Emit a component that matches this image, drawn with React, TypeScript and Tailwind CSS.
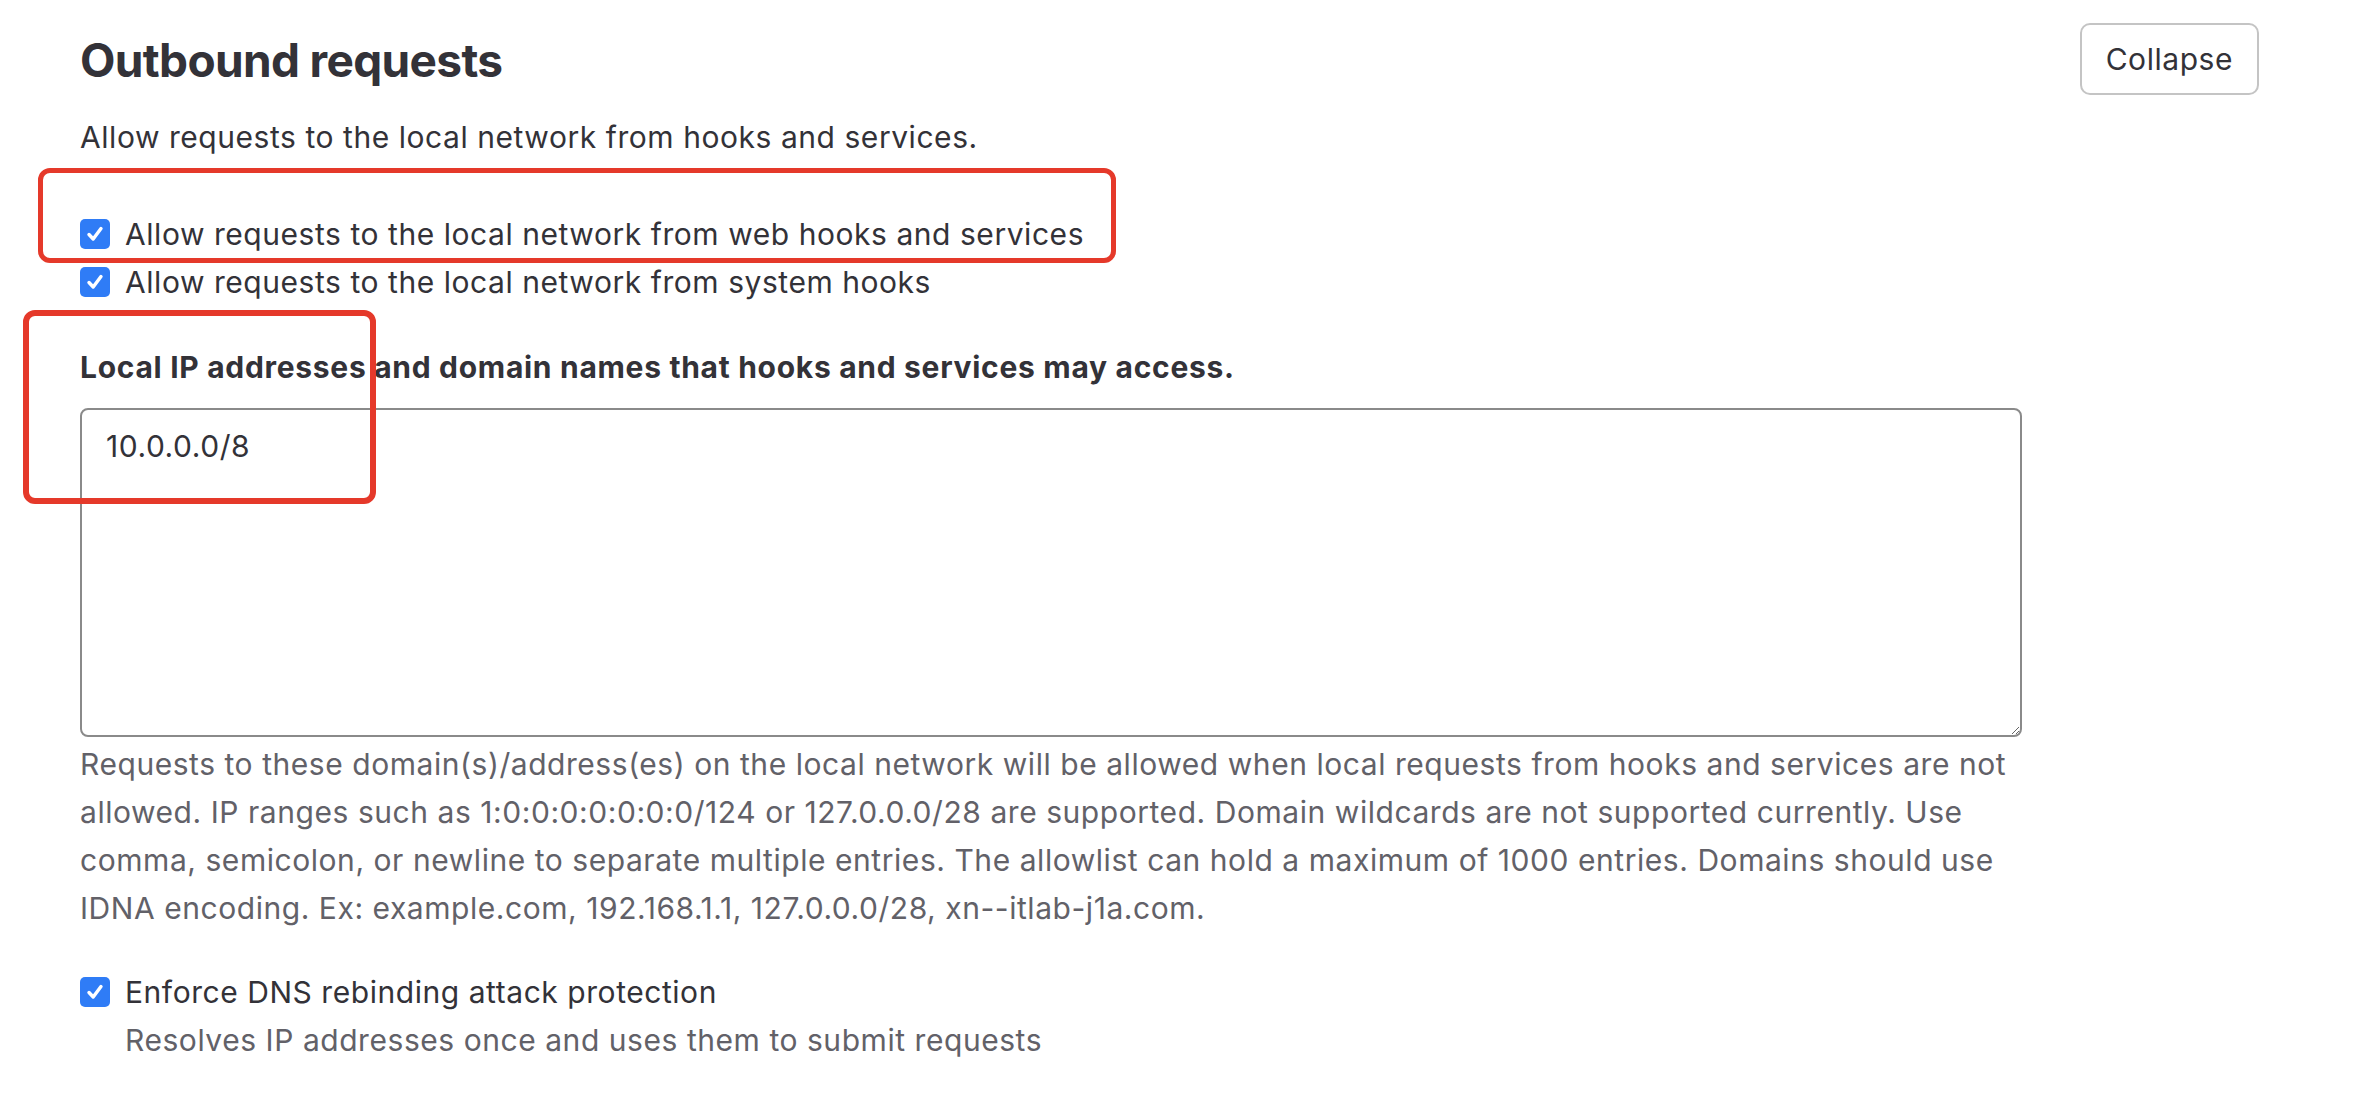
import React from "react";

const FONT = "font-['Inter','Noto_Sans','Liberation_Sans',sans-serif]";

function Check() {
  return (
    <span className="flex h-[30px] w-[30px] shrink-0 items-center justify-center rounded-[5px] bg-[#2f7cf6]">
      <svg width="22" height="22" viewBox="0 0 22 22" fill="none">
        <path d="M5 11.5 L9.2 16 L17 5.5" stroke="white" strokeWidth="3.4" strokeLinecap="round" strokeLinejoin="round" />
      </svg>
    </span>
  );
}

function CheckRow({ label }: { label: string }) {
  return (
    <label className="flex h-[48px] items-center gap-[15px] text-[30px] leading-[48px] tracking-[0.55px] text-[#333238]">
      <Check />
      <span>{label}</span>
    </label>
  );
}

export default function App() {
  return (
    <div className={`relative h-[1110px] w-[2360px] overflow-hidden bg-white ${FONT}`}>
      <div className="flex flex-col pl-[80px]">
        <div className="flex items-start justify-between pr-[101px] pt-[23px]">
          <h2 className="mt-[9px] text-[46px] font-bold leading-[56px] tracking-[-0.65px] text-[#333238]">
            Outbound requests
          </h2>
          <button className="h-[72px] rounded-[10px] border-2 border-[#c4c4c4] bg-white px-[24px] text-[30px] tracking-[0.55px] text-[#333238]">
            Collapse
          </button>
        </div>

        <p className="mt-[20px] text-[30px] leading-[44px] tracking-[0.55px] text-[#333238]">
          Allow requests to the local network from hooks and services.
        </p>

        <div className="mt-[51px] flex flex-col">
          <CheckRow label="Allow requests to the local network from web hooks and services" />
          <CheckRow label="Allow requests to the local network from system hooks" />
        </div>

        <div className="mt-[39px] w-[1942px]">
          <div className="text-[30px] font-bold leading-[44px] tracking-[0.7px] text-[#333238]">
            Local IP addresses and domain names that hooks and services may access.
          </div>
          <textarea
            className="mt-[19px] block h-[329px] w-full rounded-[8px] border-2 border-[#8a8a8a] px-[24px] pt-[14px] text-[30px] leading-[44px] tracking-[0.55px] text-[#333238] outline-none"
            defaultValue="10.0.0.0/8"
          />
          <p className="mt-[3px] text-[30px] leading-[48px] tracking-[0.55px] text-[#626168]">
            Requests to these domain(s)/address(es) on the local network will be allowed when local requests from hooks and services are not allowed. IP ranges such as 1:0:0:0:0:0:0:0/124 or 127.0.0.0/28 are supported. Domain wildcards are not supported currently. Use comma, semicolon, or newline to separate multiple entries. The allowlist can hold a maximum of 1000 entries. Domains should use IDNA encoding. Ex: example.com, 192.168.1.1, 127.0.0.0/28, xn--itlab-j1a.com.
          </p>
        </div>

        <div className="mt-[36px] flex flex-col">
          <CheckRow label="Enforce DNS rebinding attack protection" />
          <div className="pl-[45px] text-[30px] leading-[48px] tracking-[0.55px] text-[#626168]">
            Resolves IP addresses once and uses them to submit requests
          </div>
        </div>
      </div>

      <div className="pointer-events-none absolute left-[38px] top-[168px] h-[95px] w-[1078px] rounded-[12px] border-[5px] border-[#e5392a]" />
      <div className="pointer-events-none absolute left-[23px] top-[310px] h-[194px] w-[353px] rounded-[12px] border-[6px] border-[#e5392a]" />
    </div>
  );
}
